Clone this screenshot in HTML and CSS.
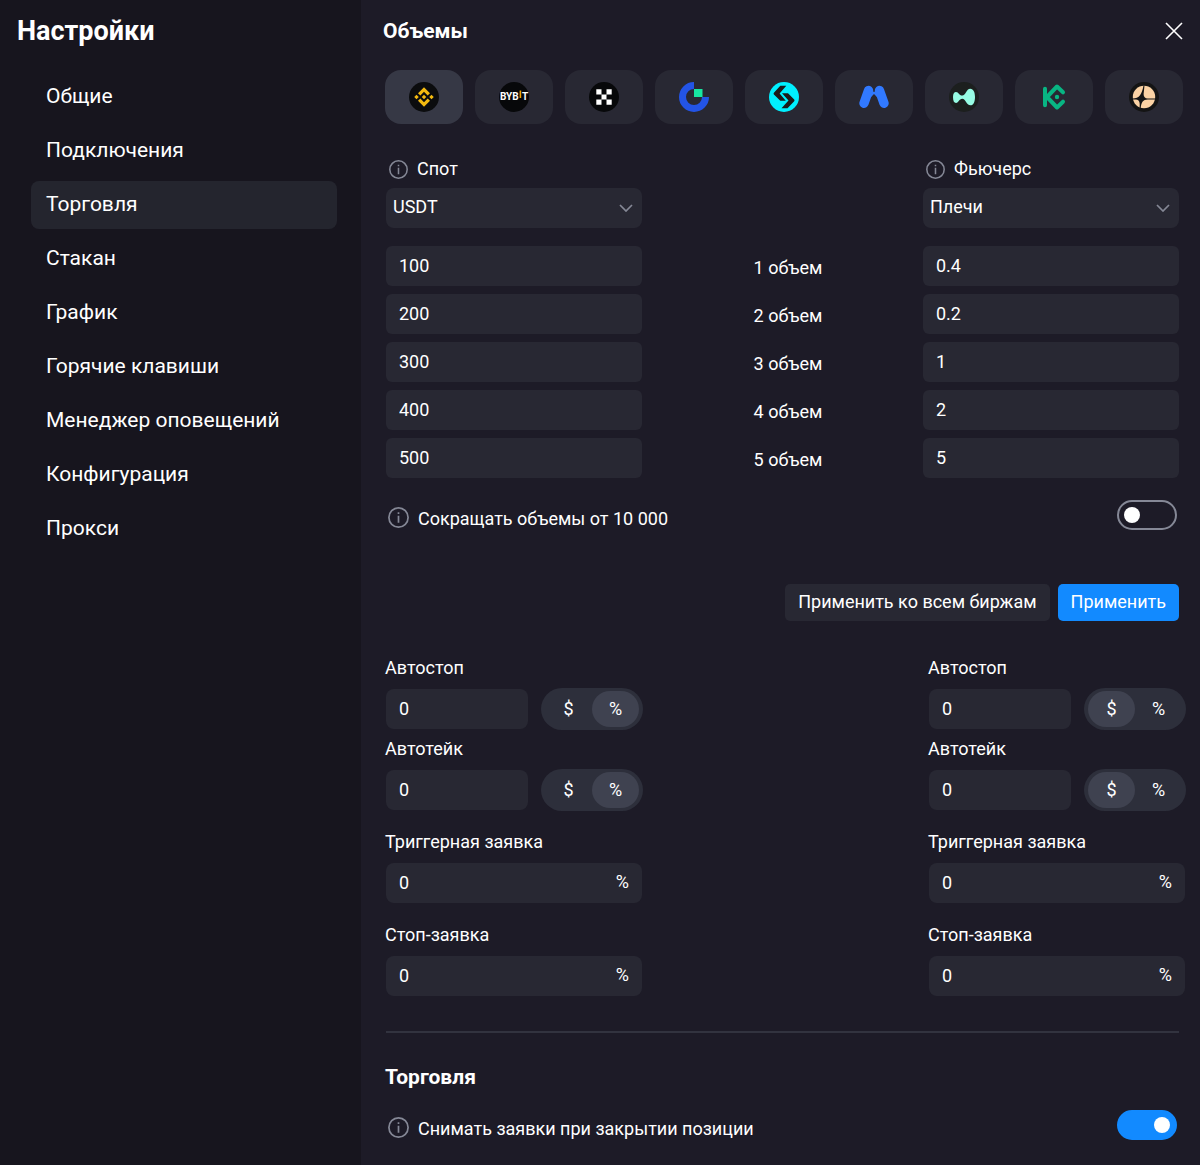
FILE: index.html
```
<!DOCTYPE html>
<html lang="ru">
<head>
  <meta charset="UTF-8">
  <meta name="viewport" content="width=device-width, initial-scale=1">
  <title>Настройки</title>
  <link rel="stylesheet" href="styles.css">
</head>
<body>
  <svg class="sprite" width="0" height="0" aria-hidden="true">
    <symbol id="info" viewBox="0 0 21 21">
      <circle cx="10.5" cy="10.5" r="9.6" fill="none" stroke="currentColor" stroke-width="1.7"/>
      <path d="M10.5 8.7v7M10.5 5.2v1.8" fill="none" stroke="currentColor" stroke-width="1.7"/>
    </symbol>
    <symbol id="chevron" viewBox="0 0 14 8">
      <path d="M1 1l6 6 6-6" fill="none" stroke="currentColor" stroke-width="1.7"/>
    </symbol>
  </svg>

  <div class="settings">
    <aside class="sidebar">
      <h1>Настройки</h1>
      <nav class="menu">
        <a href="#general">Общие</a>
        <a href="#connections">Подключения</a>
        <a href="#trade" class="active">Торговля</a>
        <a href="#orderbook">Стакан</a>
        <a href="#chart">График</a>
        <a href="#hotkeys">Горячие клавиши</a>
        <a href="#alerts">Менеджер оповещений</a>
        <a href="#config">Конфигурация</a>
        <a href="#proxy">Прокси</a>
      </nav>
    </aside>

    <main class="content">
      <header class="header">
        <h2>Объемы</h2>
        <button class="close" aria-label="Закрыть">
          <svg width="18" height="18" viewBox="0 0 18 18"><path d="M1 1l16 16M17 1L1 17" stroke="#fff" stroke-width="1.6"/></svg>
        </button>
      </header>

      <div class="exchanges">
        <button class="exchange active" aria-label="Binance">
          <svg viewBox="0 0 32 32">
            <circle cx="16" cy="16" r="16" fill="#0b0c0e"/>
            <path fill="#f3ba10" d="M12.1 14.4L16 10.5l3.9 3.9 2.5-2.5L16 5.5l-6.4 6.4zM5.6 16l2.4-2.4 2.4 2.4L8 18.400zM12.1 17.6L16 21.500l3.900-3.900 2.500 2.500L16 26.500l-6.400-6.400zM21.600 16l2.400-2.400 2.400 2.400-2.400 2.400zM18.400 16L16 18.400 13.600 16l2.400-2.400z"/>
          </svg>
        </button>
        <button class="exchange" aria-label="Bybit">
          <svg viewBox="0 0 30 30">
            <circle cx="15" cy="15" r="15" fill="#07080a"/>
            <text class="bybit" x="1" y="18">BYB</text>
            <path fill="#f7a600" d="M20.6 8.5h1.6V16h-1.6z"/>
            <text class="bybit" x="23" y="18">T</text>
          </svg>
        </button>
        <button class="exchange" aria-label="OKX">
          <svg viewBox="0 0 30 30">
            <circle cx="15" cy="15" r="15" fill="#07080a"/>
            <path fill="#fff" d="M7.3 7.3h5.200v5.200H7.300zM17.500 7.300h5.200v5.200h-5.200zM12.500 12.500h5v5h-5zM7.300 17.500h5.200v5.200H7.300zM17.500 17.500h5.200v5.200h-5.200z"/>
          </svg>
        </button>
        <button class="exchange" aria-label="Gate">
          <svg viewBox="0 0 30 30">
            <path fill="#2354e6" d="M15 0a15 15 0 1 0 15 15h-7a8 8 0 1 1-8-8z"/>
            <path fill="#17e6a1" d="M15 7h8.500v8H15z"/>
          </svg>
        </button>
        <button class="exchange" aria-label="Bitget">
          <svg viewBox="0 0 30 30">
            <circle cx="15" cy="15" r="15" fill="#00f0ff"/>
            <path fill="#1b1b1b" d="M11.300 3.800h6L10.600 11.600l6.200 7.100h-5.500L4.900 12.400q-.7-.8 0-1.600zM13 11.300h6l6.200 6.300q.7.8 0 1.600l-6.700 7.100h-6l7-7.800z"/>
          </svg>
        </button>
        <button class="exchange" aria-label="MEXC">
          <svg viewBox="0 0 30 30">
            <path d="M5 21.300L9.500 8.500M25 21.300L20.500 8.500" stroke="#3179ff" stroke-width="9.400" stroke-linecap="round"/>
            <path fill="#3179ff" d="M12 8l3 2 3-2v7l-3-3-3 3z"/>
          </svg>
        </button>
        <button class="exchange" aria-label="Hyperliquid">
          <svg viewBox="0 0 30 30">
            <circle cx="15" cy="15" r="15" fill="#1c1f1e"/>
            <path fill="#97fce4" d="M4 15c0-3.500 1.200-5 3-5 2.800 0 3 3.600 6.300 3.600 3.500 0 3.900-6.900 8-6.900 3.200 0 4.700 3.600 4.700 8.300s-1.500 8.300-4.500 8.300c-4.200 0-4.900-6.500-8.200-6.500C10 16.800 9.800 21 7 21c-2 0-3-2.200-3-6z"/>
          </svg>
        </button>
        <button class="exchange" aria-label="KuCoin">
          <svg viewBox="0 0 30 30">
            <path d="M6 6.700v16.600M24 10.300l-6-5.800L8 15l10 10.500 6-5.800" fill="none" stroke="#08b583" stroke-width="4" stroke-linecap="round" stroke-linejoin="round"/>
            <circle cx="18" cy="15" r="2.200" fill="#08b583"/>
          </svg>
        </button>
        <button class="exchange" aria-label="Aster">
          <svg viewBox="0 0 30 30">
            <circle cx="15" cy="15" r="15" fill="#141414"/>
            <circle cx="15" cy="15" r="11.200" fill="#fbd2a4"/>
            <path fill="#141414" d="M15.500 3.500L14.600 12c0 3 1.500 4.300 4 4.500h8v1h-8c-4.500 0-6.200 2.800-6.900 8.500h-1.200c.6-5 .2-8-3.500-8.500H3.500v-1C10.500 16.500 13 12 14.500 3.500z"/>
          </svg>
        </button>
      </div>

      <section class="volumes">
        <div class="market">
          <label class="market-label" for="spot"><svg class="info"><use href="#info"/></svg>Спот</label>
          <div class="select">
            <select id="spot"><option>USDT</option></select>
            <svg class="chevron"><use href="#chevron"/></svg>
          </div>
          <input class="field" id="spot1" value="100">
          <input class="field" id="spot2" value="200">
          <input class="field" id="spot3" value="300">
          <input class="field" id="spot4" value="400">
          <input class="field" id="spot5" value="500">
        </div>
        <div class="volume-names">
          <label for="spot1">1 объем</label>
          <label for="spot2">2 объем</label>
          <label for="spot3">3 объем</label>
          <label for="spot4">4 объем</label>
          <label for="spot5">5 объем</label>
        </div>
        <div class="market">
          <label class="market-label" for="futures"><svg class="info"><use href="#info"/></svg>Фьючерс</label>
          <div class="select">
            <select id="futures"><option>Плечи</option></select>
            <svg class="chevron"><use href="#chevron"/></svg>
          </div>
          <input class="field" aria-label="1 объем, фьючерс" value="0.4">
          <input class="field" aria-label="2 объем, фьючерс" value="0.2">
          <input class="field" aria-label="3 объем, фьючерс" value="1">
          <input class="field" aria-label="4 объем, фьючерс" value="2">
          <input class="field" aria-label="5 объем, фьючерс" value="5">
        </div>
      </section>

      <div class="option">
        <label for="shorten"><svg class="info big"><use href="#info"/></svg>Сокращать объемы от 10 000</label>
        <input type="checkbox" class="switch" id="shorten">
      </div>

      <div class="actions">
        <button class="btn">Применить ко всем биржам</button>
        <button class="btn primary">Применить</button>
      </div>

      <section class="orders">
        <div class="order-col">
          <label class="caption" for="stop1">Автостоп</label>
          <div class="amount">
            <input class="field" id="stop1" value="0">
            <div class="units">
              <label><input type="radio" name="stop1u"><span>$</span></label>
              <label><input type="radio" name="stop1u" checked><span>%</span></label>
            </div>
          </div>
          <label class="caption" for="take1">Автотейк</label>
          <div class="amount">
            <input class="field" id="take1" value="0">
            <div class="units">
              <label><input type="radio" name="take1u"><span>$</span></label>
              <label><input type="radio" name="take1u" checked><span>%</span></label>
            </div>
          </div>
          <label class="caption wide" for="trigger1">Триггерная заявка</label>
          <div class="percent"><input class="field" id="trigger1" value="0"><span>%</span></div>
          <label class="caption wide" for="stoporder1">Стоп-заявка</label>
          <div class="percent"><input class="field" id="stoporder1" value="0"><span>%</span></div>
        </div>
        <div class="order-col">
          <label class="caption" for="stop2">Автостоп</label>
          <div class="amount">
            <input class="field" id="stop2" value="0">
            <div class="units">
              <label><input type="radio" name="stop2u" checked><span>$</span></label>
              <label><input type="radio" name="stop2u"><span>%</span></label>
            </div>
          </div>
          <label class="caption" for="take2">Автотейк</label>
          <div class="amount">
            <input class="field" id="take2" value="0">
            <div class="units">
              <label><input type="radio" name="take2u" checked><span>$</span></label>
              <label><input type="radio" name="take2u"><span>%</span></label>
            </div>
          </div>
          <label class="caption wide" for="trigger2">Триггерная заявка</label>
          <div class="percent"><input class="field" id="trigger2" value="0"><span>%</span></div>
          <label class="caption wide" for="stoporder2">Стоп-заявка</label>
          <div class="percent"><input class="field" id="stoporder2" value="0"><span>%</span></div>
        </div>
      </section>

      <hr>

      <h2 class="trade-title">Торговля</h2>
      <div class="option">
        <label for="cancel"><svg class="info big"><use href="#info"/></svg>Снимать заявки при закрытии позиции</label>
        <input type="checkbox" class="switch" id="cancel" checked>
      </div>
    </main>
  </div>
</body>
</html>
```
FILE: styles.css
```
* {
  box-sizing: border-box;
}
body {
  margin: 0;
  background-color: #1d1b27;
  color: #fff;
  font-family: Roboto, "Noto Sans", sans-serif;
  font-size: 18px;
  line-height: 24px;
}
h1, h2 {
  margin: 0;
  font-weight: 700;
}
h1 {
  font-size: 27px;
  line-height: 32px;
}
h2 {
  font-size: 21px;
  line-height: 24px;
}
button, input, select {
  font: inherit;
  color: inherit;
  margin: 0;
  border: none;
}
button {
  cursor: pointer;
}
.sprite {
  position: absolute;
}
.settings {
  display: flex;
  min-height: 100vh;
}

/* sidebar */
.sidebar {
  flex: 0 0 361px;
  padding: 15px 24px 15px 17px;
  background-color: #17151e;
}
.menu {
  display: flex;
  flex-direction: column;
  gap: 6px;
  margin: 26px 0 0 14px;
}
.menu a {
  height: 48px;
  padding: 0 15px;
  border-radius: 8px;
  color: #fff;
  font-size: 21px;
  line-height: 46px;
  text-decoration: none;
}
.menu a.active {
  background-color: #24252e;
}

/* content */
.content {
  flex: 1;
  min-width: 0;
  padding: 19px 14px 20px 22px;
}
.header {
  display: flex;
  justify-content: space-between;
  align-items: center;
  height: 24px;
}
.close {
  display: flex;
  padding: 3px;
  background: none;
}
.exchanges {
  display: flex;
  gap: 12px;
  margin: 27px 0 0 2px;
}
.exchange {
  flex: 0 1 78px;
  display: flex;
  justify-content: center;
  align-items: center;
  height: 54px;
  padding: 0;
  border-radius: 16px;
  background-color: #282833;
}
.exchange.active {
  background-color: #363845;
}
.exchange svg {
  width: 30px;
  height: 30px;
}
.bybit {
  font-size: 10px;
  font-weight: 700;
  fill: #fff;
}

.volumes, .option, .actions, hr {
  margin-left: 3px;
  margin-right: 7px;
}
.volumes {
  display: grid;
  grid-template-columns: 256px 1fr 256px;
  margin-top: 33px;
}
.market {
  display: flex;
  flex-direction: column;
  gap: 8px;
}
.market-label {
  display: flex;
  align-items: center;
  gap: 9px;
  padding-left: 3px;
  margin-bottom: -1px;
}
.info {
  width: 19px;
  height: 19px;
  color: #858896;
}
.info.big {
  width: 21px;
  height: 21px;
}
.field {
  width: 100%;
  height: 40px;
  padding: 0 13px 2px;
  border-radius: 6px;
  background-color: #282833;
}
.select {
  display: grid;
  align-items: center;
  margin-bottom: 10px;
}
.select select {
  grid-area: 1 / 1;
  width: 100%;
  height: 40px;
  padding: 0 7px 2px;
  border-radius: 8px;
  background-color: #282833;
  appearance: none;
}
.chevron {
  grid-area: 1 / 1;
  justify-self: end;
  width: 14px;
  height: 8px;
  margin-right: 9px;
  color: #858896;
  pointer-events: none;
}
.volume-names {
  display: flex;
  flex-direction: column;
  justify-content: flex-end;
  gap: 8px;
  padding-left: 11px;
  text-align: center;
}
.volume-names label {
  height: 40px;
  line-height: 44px;
}

.option {
  display: flex;
  justify-content: space-between;
  margin-top: 22px;
  padding-right: 2px;
}
.option label {
  display: flex;
  align-items: flex-start;
  gap: 9px;
  padding: 7px 0 0 2px;
}
.switch {
  appearance: none;
  display: flex;
  align-items: center;
  width: 60px;
  height: 30px;
  padding: 0 5px;
  border: 2px solid #858896;
  border-radius: 15px;
  cursor: pointer;
}
.switch::before {
  content: "";
  width: 16px;
  height: 16px;
  border-radius: 50%;
  background-color: #fff;
}
.switch:checked {
  justify-content: flex-end;
  border-color: #128aff;
  background-color: #128aff;
}
.actions {
  display: flex;
  justify-content: flex-end;
  gap: 8px;
  margin-top: 53px;
}
.btn {
  height: 37px;
  padding: 0 13px 2px;
  border-radius: 5px;
  background-color: #282833;
}
.btn.primary {
  background-color: #128aff;
}

/* stop and take orders */
.orders {
  display: flex;
  justify-content: space-between;
  margin: 35px 0 0 3px;
}
.order-col {
  display: flex;
  flex-direction: column;
  width: 257px;
}
.caption {
  margin: 0 0 8px -1px;
}
.caption.wide {
  margin-top: 20px;
  margin-bottom: 9px;
}
.amount {
  display: flex;
  align-items: center;
  gap: 13px;
  margin-bottom: 7px;
}
.amount .field {
  flex: 1;
  min-width: 0;
  border-radius: 8px;
}
.amount + .caption.wide {
  margin-top: 12px;
}
.units {
  display: flex;
  padding: 3px 4px;
  border-radius: 21px;
  background-color: #2d2f3b;
}
.units label {
  cursor: pointer;
}
.units input {
  position: absolute;
  opacity: 0;
}
.units span {
  display: block;
  width: 47px;
  border-radius: 18px;
  line-height: 36px;
  text-align: center;
}
.units input:checked + span {
  background-color: #3f4250;
}
.percent {
  display: flex;
  align-items: center;
  margin-right: 1px;
  padding-right: 13px;
  border-radius: 8px;
  background-color: #282833;
}
.percent .field {
  flex: 1;
  min-width: 0;
  background: none;
}
.percent span {
  padding-bottom: 2px;
}
hr {
  height: 2px;
  margin-top: 35px;
  margin-bottom: 0;
  border: none;
  background-color: #32333f;
}
.trade-title {
  margin: 32px 0 0 2px;
}
.trade-title + .option {
  margin-top: 21px;
}
```
